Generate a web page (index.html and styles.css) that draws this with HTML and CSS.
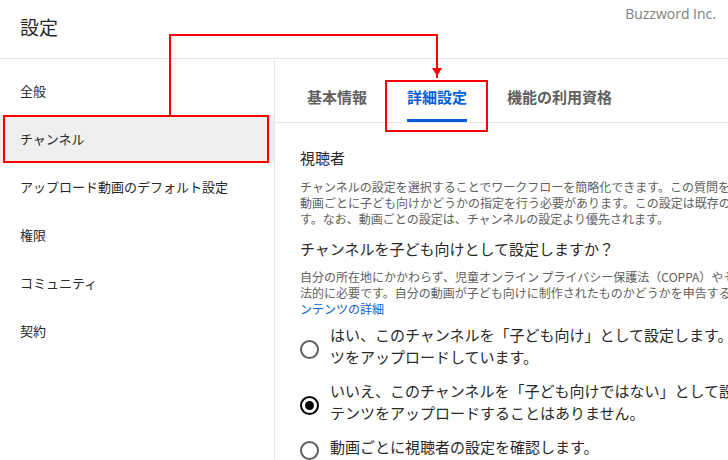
FILE: index.html
```html
<!DOCTYPE html>
<html lang="ja">
<head>
    <meta charset="UTF-8">
    <meta name="viewport" content="width=device-width, initial-scale=1.0">
    <title>設定</title>
    <link rel="stylesheet" href="styles.css">
</head>
<body>
<div class="page">
    <div class="topbar">
        <h1 class="title">設定</h1>
        <span class="credit">Buzzword Inc.</span>
    </div>

    <div class="main">
        <nav class="sidebar">
            <a class="side-item" href="#">全般</a>
            <a class="side-item active" href="#">チャンネル</a>
            <a class="side-item" href="#">アップロード動画のデフォルト設定</a>
            <a class="side-item" href="#">権限</a>
            <a class="side-item" href="#">コミュニティ</a>
            <a class="side-item" href="#">契約</a>
        </nav>

        <div class="content">
            <div class="tabs">
                <a class="tab" href="#">基本情報</a>
                <a class="tab active" href="#">詳細設定</a>
                <a class="tab" href="#">機能の利用資格</a>
            </div>

            <div class="panel">
                <h2 class="section-title">視聴者</h2>
                <p class="desc">
                    チャンネルの設定を選択することでワークフローを簡略化できます。この質問をスキップした場合は、<br>
                    動画ごとに子ども向けかどうかの指定を行う必要があります。この設定は既存の動画と今後の動画に反映されま<br>
                    す。なお、動画ごとの設定は、チャンネルの設定より優先されます。
                </p>

                <h3 class="question">チャンネルを子ども向けとして設定しますか？</h3>
                <p class="desc">
                    自分の所在地にかかわらず、児童オンライン プライバシー保護法（COPPA）やその他の法律の遵守が<br>
                    法的に必要です。自分の動画が子ども向けに制作されたものかどうかを申告する必要があります。<a href="#">子ども向けコ<br>
                    ンテンツの詳細</a>
                </p>

                <div class="options">
                    <label class="option">
                        <span class="radio"></span>
                        <span class="option-text">はい、このチャンネルを「子ども向け」として設定します。常に子ども向けのコンテン<br>ツをアップロードしています。</span>
                    </label>
                    <label class="option">
                        <span class="radio checked"></span>
                        <span class="option-text">いいえ、このチャンネルを「子ども向けではない」として設定します。子ども向けのコン<br>テンツをアップロードすることはありません。</span>
                    </label>
                    <label class="option">
                        <span class="radio"></span>
                        <span class="option-text">動画ごとに視聴者の設定を確認します。</span>
                    </label>
                </div>
            </div>
        </div>
    </div>

    <svg class="marks" width="728" height="460" viewBox="0 0 728 460">
        <rect x="4" y="116" width="264" height="46" fill="none" stroke="#ff0000" stroke-width="2"/>
        <rect x="386" y="81" width="101" height="50" fill="none" stroke="#ff0000" stroke-width="2"/>
        <polyline points="170,115 170,35 437,35 437,70" fill="none" stroke="#ff0000" stroke-width="2"/>
        <polygon points="432,68 442,68 437,76" fill="#ff0000"/>
        <line x1="437" y1="74" x2="437" y2="78" stroke="#ff0000" stroke-width="2"/>
    </svg>
</div>
</body>
</html>
```

FILE: styles.css
```css
body {
    margin: 0;
    padding: 0;
    background-color: #fff;
    font-family: "Noto Sans CJK JP", "Noto Sans", sans-serif;
    color: #282828;
    overflow: hidden;
}

.page {
    position: relative;
    width: 728px;
    height: 460px;
    overflow: hidden;
}

.topbar {
    height: 58px;
    border-bottom: 1px solid #e5e5e5;
    box-sizing: content-box;
}

.title {
    margin: 0;
    padding: 15px 0 0 20px;
    font-size: 19px;
    font-weight: normal;
    line-height: 24px;
    color: #282828;
}

.credit {
    position: absolute;
    top: 4px;
    right: 12px;
    font-family: "Open Sans", "Noto Sans", sans-serif;
    font-size: 14px;
    line-height: 20px;
    color: #808080;
}

.main {
    display: flex;
    height: 401px;
}

.sidebar {
    width: 274px;
    flex-shrink: 0;
    border-right: 1px solid #e5e5e5;
    padding-top: 8px;
    display: flex;
    flex-direction: column;
}

.side-item {
    display: block;
    height: 48px;
    line-height: 48px;
    padding-left: 20px;
    font-size: 13px;
    color: #282828;
    text-decoration: none;
}

.side-item.active {
    background-color: #efefef;
}

.content {
    flex: 1;
    min-width: 0;
    overflow: hidden;
}

.tabs {
    display: flex;
    gap: 40px;
    height: 63px;
    padding-left: 32px;
    border-bottom: 1px solid #e5e5e5;
    box-sizing: content-box;
}

.tab {
    box-sizing: border-box;
    height: 63px;
    padding-top: 26px;
    line-height: 24px;
    font-size: 15px;
    font-weight: bold;
    color: #606060;
    text-decoration: none;
    border-bottom: 3px solid transparent;
}

.tab.active {
    color: #065fd4;
    border-bottom-color: #065fd4;
}

.panel {
    padding: 23px 0 0 25px;
    white-space: nowrap;
}

.section-title,
.question {
    margin: 0;
    font-size: 15px;
    font-weight: normal;
    line-height: 24px;
    color: #282828;
}

.desc {
    margin: 9px 0 0;
    font-size: 12px;
    line-height: 16px;
    color: #606060;
}

.desc + .question {
    margin-top: 10px;
}

.question + .desc {
    margin-top: 8px;
}

.desc a {
    color: #065fd4;
    text-decoration: none;
}

.options {
    display: flex;
    flex-direction: column;
    gap: 12px;
    margin-top: 7px;
}

.option {
    display: flex;
    align-items: center;
    gap: 11px;
}

.radio {
    width: 15px;
    height: 15px;
    border: 2px solid #606060;
    border-radius: 50%;
    flex-shrink: 0;
    position: relative;
    top: 3px;
}

.radio.checked {
    border-color: #030303;
}

.radio.checked::after {
    content: "";
    position: absolute;
    left: 3px;
    top: 3px;
    width: 9px;
    height: 9px;
    border-radius: 50%;
    background-color: #030303;
}

.option-text {
    font-size: 15px;
    line-height: 22px;
    color: #282828;
}

.marks {
    position: absolute;
    left: 0;
    top: 0;
    pointer-events: none;
}
```
